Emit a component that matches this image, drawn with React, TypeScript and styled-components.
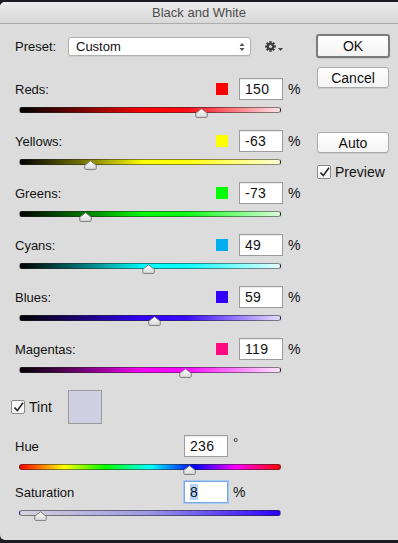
import styled, { createGlobalStyle } from 'styled-components';

type Channel = {
  name: string,
  value: number,
  swatch: string,
  gradient: string,
}

const channels: Channel[] = [
  {
    name: 'Reds', value: 150, swatch: '#ff0000',
    gradient: 'linear-gradient(to right, #000 0%, #700000 22%, #ff0000 48%, #ff0a14 64%, #ffe4e8 100%)',
  },
  {
    name: 'Yellows', value: -63, swatch: '#ffff00',
    gradient: 'linear-gradient(to right, #000 0%, #6a6a00 22%, #ffff00 48%, #ffff0a 64%, #ffffd8 100%)',
  },
  {
    name: 'Greens', value: -73, swatch: '#00ff00',
    gradient: 'linear-gradient(to right, #000 0%, #006a00 22%, #00ff00 48%, #0aff14 64%, #dcffdc 100%)',
  },
  {
    name: 'Cyans', value: 49, swatch: '#00aeef',
    gradient: 'linear-gradient(to right, #000 0%, #006a6a 22%, #00ffff 48%, #0affff 64%, #e4ffff 100%)',
  },
  {
    name: 'Blues', value: 59, swatch: '#3300ff',
    gradient: 'linear-gradient(to right, #000 0%, #1a0070 22%, #3300ff 48%, #3a0aff 64%, #e4dcff 100%)',
  },
  {
    name: 'Magentas', value: 119, swatch: '#ff0a80',
    gradient: 'linear-gradient(to right, #000 0%, #6a006a 22%, #ff00ff 48%, #ff0aff 64%, #ffe4ff 100%)',
  },
];

const GlobalStyle = createGlobalStyle`
  html, body {
    margin: 0;
    padding: 0;
    background: #1c1c22;
  }
  body {
    font-family: "Liberation Sans", Arial, sans-serif;
    font-size: 13px;
    color: #111;
  }
`;

const StyledWindow = styled.div`
  margin-top: 2px;
  width: 398px;
  height: 538px;
  background: #dcdcdc;
  border-radius: 5px 0 0 5px;
  overflow: hidden;
  display: flex;
  flex-direction: column;
`;

const StyledTitleBar = styled.div`
  height: 21px;
  flex-shrink: 0;
  display: flex;
  align-items: center;
  justify-content: center;
  background: linear-gradient(#ececec, #d8d8d8);
  border-bottom: 1px solid #acacac;
  color: #4d4d4d;
  font-size: 13px;
`;

const StyledBody = styled.div`
  display: flex;
  flex-direction: row;
`;

const StyledLeft = styled.div`
  width: 300px;
  display: flex;
  flex-direction: column;
`;

const StyledRight = styled.div`
  width: 82px;
  padding-left: 16px;
  display: flex;
  flex-direction: column;
  align-items: flex-start;
`;

const StyledPresetRow = styled.div`
  margin-top: 12px;
  height: 21px;
  padding-left: 15px;
  display: flex;
  align-items: center;
`;

const StyledPresetLabel = styled.span`
  width: 53px;
`;

const StyledSelect = styled.div`
  width: 183px;
  height: 19px;
  box-sizing: border-box;
  background: #fff;
  border: 1px solid #b0b0b0;
  border-radius: 3px;
  box-shadow: 0 1px 0 rgba(0, 0, 0, 0.06);
  display: flex;
  align-items: center;
  justify-content: space-between;
  padding: 0 5px 0 7px;
`;

const StyledGear = styled.div`
  margin-left: 14px;
  display: flex;
  align-items: center;
  gap: 2px;
`;

const StyledSliders = styled.div`
  margin-top: 21px;
  display: flex;
  flex-direction: column;
  gap: 17px;
`;

const StyledSliderBlock = styled.div<{ $top?: number }>`
  margin-top: ${(props) => props.$top ?? 0}px;
  display: flex;
  flex-direction: column;
`;

const StyledHeader = styled.div`
  height: 22px;
  padding-left: 15px;
  display: flex;
  align-items: center;
`;

const StyledLabel = styled.span`
  flex: 1;
`;

const StyledSwatch = styled.span<{ $color: string }>`
  width: 12px;
  height: 12px;
  margin-right: 11px;
  background: ${(props) => props.$color};
`;

const StyledValueBox = styled.div<{ $focus?: boolean }>`
  width: 44px;
  height: 22px;
  box-sizing: border-box;
  background: #fff;
  border: 1px solid ${(props) => (props.$focus ? '#7aa8e2' : '#9c9c9c')};
  box-shadow: ${(props) => (props.$focus ? '0 0 0 1px #a8c8ef' : 'inset 0 1px 1px rgba(0, 0, 0, 0.08)')};
  padding-left: 5px;
  display: flex;
  align-items: center;
  font-size: 14px;
  letter-spacing: 0.3px;
`;

const StyledSelected = styled.span`
  background: #b4d4fc;
`;

const StyledUnit = styled.span<{ $width: number }>`
  width: ${(props) => props.$width}px;
  box-sizing: border-box;
  padding-left: 5px;
  font-size: 14px;
  align-self: flex-start;
  padding-top: 3px;
`;

const StyledDegree = styled(StyledUnit)`
  padding-top: 0;
  font-size: 13px;
`;

const StyledTrack = styled.div<{ $gradient: string }>`
  position: relative;
  margin: 7px 0 0 19px;
  width: 260px;
  height: 4px;
  border: 1px solid rgba(40, 40, 40, 0.55);
  border-radius: 3px;
  background: ${(props) => props.$gradient};
`;

const StyledThumb = styled.svg`
  position: absolute;
  top: 0px;
  width: 13px;
  height: 10px;
`;

const StyledTintRow = styled.div`
  margin-top: 17px;
  padding-left: 11px;
  display: flex;
  align-items: center;
`;

const StyledTintSwatch = styled.div`
  margin-left: 16px;
  width: 34px;
  height: 34px;
  box-sizing: border-box;
  background: #cfd0e1;
  border: 1px solid #9a9a9a;
`;

const StyledCheck = styled.span`
  width: 14px;
  height: 14px;
  box-sizing: border-box;
  background: linear-gradient(#fff, #f2f2f2);
  border: 1px solid #8a8a8a;
  border-radius: 2px;
  display: inline-flex;
  align-items: center;
  justify-content: center;
  margin-right: 4px;
`;

const StyledCheckLabel = styled.span`
  font-size: 14px;
`;

const StyledButton = styled.div<{ $top: number, $default?: boolean }>`
  margin-top: ${(props) => props.$top}px;
  margin-left: ${(props) => (props.$default ? 0 : 1)}px;
  width: ${(props) => (props.$default ? 74 : 72)}px;
  height: ${(props) => (props.$default ? 24 : 21)}px;
  box-sizing: border-box;
  background: linear-gradient(#ffffff, #f3f3f3);
  border: ${(props) => (props.$default ? '2px solid #7a7a7a' : '1px solid #ababab')};
  border-radius: 3px;
  box-shadow: 0 1px 0 rgba(0, 0, 0, 0.08);
  display: flex;
  align-items: center;
  justify-content: center;
  font-size: 14px;
`;

const StyledPreview = styled.div`
  margin-top: 11px;
  margin-left: 1px;
  display: flex;
  align-items: center;
`;

function Thumb({ pct }: { pct: number }) {
  return (
    <StyledThumb viewBox="0 0 13 10" style={{ left: `calc(${pct}% - 7px)` }}>
      <defs>
        <linearGradient id="thumbFill" x1="0" y1="0" x2="0" y2="1">
          <stop offset="0" stopColor="#ffffff" />
          <stop offset="1" stopColor="#d9d9d9" />
        </linearGradient>
      </defs>
      <path
        d="M6.5 0.8 L12.2 5.2 L12.2 8.6 Q12.2 9.4 11.4 9.4 L1.6 9.4 Q0.8 9.4 0.8 8.6 L0.8 5.2 Z"
        fill="url(#thumbFill)"
        stroke="#7b7b7b"
        strokeWidth="1"
      />
    </StyledThumb>
  );
}

function CheckMark() {
  return (
    <svg width="11" height="11" viewBox="0 0 11 11">
      <path d="M1.5 5.5 L4.3 8.6 L10 0.8" fill="none" stroke="#222" strokeWidth="1.6" />
    </svg>
  );
}

function GearIcon() {
  return (
    <>
      <svg width="11" height="11" viewBox="0 0 11 11">
        <g fill="#3f3f3f" transform="translate(5.5 5.5)">
          <circle r="3.6" />
          {[0, 45, 90, 135].map((deg) => (
            <rect key={deg} x="-1.2" y="-5.3" width="2.4" height="10.6" transform={`rotate(${deg})`} />
          ))}
        </g>
        <circle cx="5.5" cy="5.5" r="1.5" fill="#dcdcdc" />
      </svg>
      <svg width="5" height="3" viewBox="0 0 5 3" style={{ marginTop: 6 }}>
        <path d="M0 0 L5 0 L2.5 3 Z" fill="#444" />
      </svg>
    </>
  );
}

function SelectArrows() {
  return (
    <svg width="6" height="10" viewBox="0 0 6 10">
      <path d="M0.5 4 L3 1 L5.5 4 Z M0.5 6 L3 9 L5.5 6 Z" fill="#505050" />
    </svg>
  );
}

const toPct = (value: number, min: number, max: number) => ((value - min) / (max - min)) * 100;

export default function App() {
  return (
    <>
      <GlobalStyle />
      <StyledWindow>
        <StyledTitleBar>Black and White</StyledTitleBar>
        <StyledBody>
          <StyledLeft>
            <StyledPresetRow>
              <StyledPresetLabel>Preset:</StyledPresetLabel>
              <StyledSelect>
                Custom
                <SelectArrows />
              </StyledSelect>
              <StyledGear>
                <GearIcon />
              </StyledGear>
            </StyledPresetRow>

            <StyledSliders>
              {channels.map((channel) => (
                <StyledSliderBlock key={channel.name}>
                  <StyledHeader>
                    <StyledLabel>{`${channel.name}:`}</StyledLabel>
                    <StyledSwatch $color={channel.swatch} />
                    <StyledValueBox>{channel.value}</StyledValueBox>
                    <StyledUnit $width={17}>%</StyledUnit>
                  </StyledHeader>
                  <StyledTrack $gradient={channel.gradient}>
                    <Thumb pct={toPct(channel.value, -200, 300)} />
                  </StyledTrack>
                </StyledSliderBlock>
              ))}
            </StyledSliders>

            <StyledTintRow>
              <StyledCheck><CheckMark /></StyledCheck>
              <StyledCheckLabel>Tint</StyledCheckLabel>
              <StyledTintSwatch />
            </StyledTintRow>

            <StyledSliderBlock $top={11}>
              <StyledHeader>
                <StyledLabel>Hue</StyledLabel>
                <StyledValueBox>236</StyledValueBox>
                <StyledDegree $width={72}>°</StyledDegree>
              </StyledHeader>
              <StyledTrack $gradient="linear-gradient(to right, #ff0000, #ffff00 17%, #00ff00 33%, #00ffff 50%, #0000ff 67%, #ff00ff 83%, #ff0000)">
                <Thumb pct={toPct(236, 0, 360)} />
              </StyledTrack>
            </StyledSliderBlock>

            <StyledSliderBlock $top={11}>
              <StyledHeader>
                <StyledLabel>Saturation</StyledLabel>
                <StyledValueBox $focus><StyledSelected>8</StyledSelected></StyledValueBox>
                <StyledUnit $width={72}>%</StyledUnit>
              </StyledHeader>
              <StyledTrack $gradient="linear-gradient(to right, #d6d6da, #9c94e4 50%, #2a00ff)">
                <Thumb pct={toPct(8, 0, 100)} />
              </StyledTrack>
            </StyledSliderBlock>
          </StyledLeft>

          <StyledRight>
            <StyledButton $top={10} $default>OK</StyledButton>
            <StyledButton $top={9}>Cancel</StyledButton>
            <StyledButton $top={44}>Auto</StyledButton>
            <StyledPreview>
              <StyledCheck><CheckMark /></StyledCheck>
              <StyledCheckLabel>Preview</StyledCheckLabel>
            </StyledPreview>
          </StyledRight>
        </StyledBody>
      </StyledWindow>
    </>
  );
}
